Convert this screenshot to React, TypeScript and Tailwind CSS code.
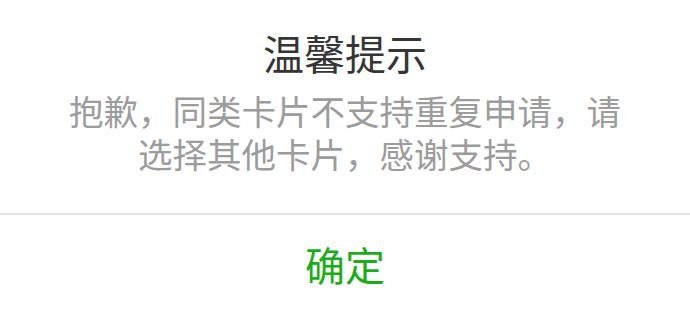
export default function App() {
  return (
    <div
      className="w-[690px] h-[321px] bg-white flex flex-col"
      style={{ fontFamily: '"Noto Sans CJK SC", "Noto Sans", sans-serif' }}
    >
      <div className="flex flex-col items-center px-[60px] pt-[27px] h-[213px]">
        <h2 className="text-[41px] leading-[50px] text-[#353535] font-normal">温馨提示</h2>
        <p className="mt-[12px] text-[34.5px] leading-[43px] text-[#9c9c9c] text-center">
          抱歉，同类卡片不支持重复申请，请选择其他卡片，感谢支持。
        </p>
      </div>
      <div className="h-[2px] bg-[#e4e4e4]" />
      <div className="flex-1 flex items-center justify-center bg-white pb-[8px]">
        <span className="text-[40px] leading-[50px] text-[#1aad19]">确定</span>
      </div>
    </div>
  );
}
